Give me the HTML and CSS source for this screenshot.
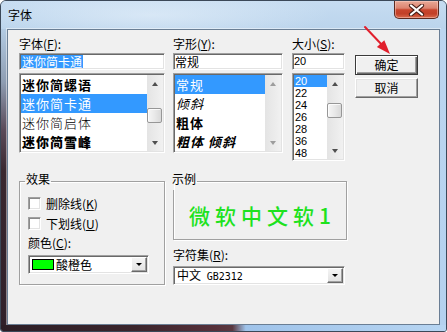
FILE: index.html
```html
<!DOCTYPE html>
<html lang="zh-CN">
<head>
<meta charset="utf-8">
<title>字体</title>
<link rel="stylesheet" href="styles.css">
</head>
<body>
<div class="window">
  <div class="titlebar">
    <span class="title">字体</span>
    <div class="close">
      <svg width="17" height="12" viewBox="0 0 17 12">
        <path d="M3 1.5 L14 10.5 M14 1.5 L3 10.5" stroke="#4a2018" stroke-width="4.2" stroke-linecap="round"/>
        <path d="M3 1.5 L14 10.5 M14 1.5 L3 10.5" stroke="#ffffff" stroke-width="2.2" stroke-linecap="round"/>
      </svg>
    </div>
  </div>
  <div class="middle">
    <div class="edge-left"></div>
    <div class="client">
      <div class="top-row">
        <div class="col col-font">
          <div class="label">字体(<u>F</u>):</div>
          <div class="edit sunken"><span class="sel-text">迷你简卡通</span></div>
          <div class="listbox sunken list-font">
            <div class="items">
              <div class="item f-bold">迷你简螺语</div>
              <div class="item selected">迷你简卡通</div>
              <div class="item f-thin">迷你简启体</div>
              <div class="item f-heavy">迷你简雪峰</div>
            </div>
            <div class="vscroll">
              <div class="sb-btn"><span class="tri-up"></span></div>
              <div class="sb-track track-font"><div class="thumb"></div></div>
              <div class="sb-btn"><span class="tri-down"></span></div>
            </div>
          </div>
        </div>
        <div class="col col-style">
          <div class="label">字形(<u>Y</u>):</div>
          <div class="edit sunken"><span class="edit-text">常规</span></div>
          <div class="listbox sunken list-style">
            <div class="items">
              <div class="item selected">常规</div>
              <div class="item s-italic">倾斜</div>
              <div class="item s-bold">粗体</div>
              <div class="item s-bold s-italic">粗体 倾斜</div>
            </div>
            <div class="vscroll disabled">
              <div class="sb-btn"><span class="tri-up"></span></div>
              <div class="sb-track"></div>
              <div class="sb-btn"><span class="tri-down"></span></div>
            </div>
          </div>
        </div>
        <div class="col col-size">
          <div class="label">大小(<u>S</u>):</div>
          <div class="edit sunken"><span class="edit-text num">20</span></div>
          <div class="listbox sunken list-size">
            <div class="items">
              <div class="item small selected">20</div>
              <div class="item small">22</div>
              <div class="item small">24</div>
              <div class="item small">26</div>
              <div class="item small">28</div>
              <div class="item small">36</div>
              <div class="item small">48</div>
            </div>
            <div class="vscroll">
              <div class="sb-btn"><span class="tri-up"></span></div>
              <div class="sb-track track-size"><div class="thumb"></div></div>
              <div class="sb-btn"><span class="tri-down"></span></div>
            </div>
          </div>
        </div>
        <div class="buttons">
          <div class="btn default">确定</div>
          <div class="btn">取消</div>
        </div>
      </div>
      <div class="bottom-row">
        <fieldset class="group effects">
          <legend>效果</legend>
          <div class="check"><span class="box"></span><span class="check-text">删除线(<u>K</u>)</span></div>
          <div class="check"><span class="box"></span><span class="check-text">下划线(<u>U</u>)</span></div>
          <div class="label color-label">颜色(<u>C</u>):</div>
          <div class="combo sunken color-combo">
            <span class="swatch"></span>
            <span class="combo-text">酸橙色</span>
            <span class="drop"><span class="tri-down black"></span></span>
          </div>
        </fieldset>
        <div class="right-col">
          <fieldset class="group sample">
            <legend>示例</legend>
            <div class="sample-text">微软中文软1</div>
          </fieldset>
          <div class="label charset-label">字符集(<u>R</u>):</div>
          <div class="combo sunken charset-combo">
            <span class="combo-text">中文 <span class="mono">GB2312</span></span>
            <span class="drop"><span class="tri-down black"></span></span>
          </div>
        </div>
      </div>
    </div>
    <div class="edge-right"></div>
  </div>
  <div class="edge-bottom"></div>
  <svg class="arrow" width="40" height="40" viewBox="0 0 40 40">
    <path d="M5 5 L23 24" stroke="#e11f2c" stroke-width="2" stroke-linecap="round"/>
    <path d="M30 32 L16.9 25 L24.3 18.2 Z" fill="#e11f2c"/>
  </svg>
</div>
</body>
</html>
```
FILE: styles.css
```css
* { box-sizing: border-box; }
html, body { margin: 0; padding: 0; }
body {
  width: 447px;
  height: 332px;
  overflow: hidden;
  background: #ffffff;
  font-family: "Noto Sans CJK SC", "Noto Sans", sans-serif;
  font-size: 12px;
  color: #000;
}
u { text-decoration: underline; text-underline-offset: 1px; }

.window {
  position: relative;
  width: 447px;
  height: 332px;
  border: 1px solid #3b4858;
  border-radius: 6px 6px 3px 3px;
  display: flex;
  flex-direction: column;
  overflow: hidden;
  background: #b8d3ef;
}

/* ---------- title bar ---------- */
.titlebar {
  height: 28px;
  flex: none;
  display: flex;
  justify-content: space-between;
  align-items: flex-start;
  padding-left: 7px;
  background:
    radial-gradient(ellipse 180px 26px at 150px 14px, rgba(235,244,252,0.55), rgba(235,244,252,0) 100%),
    linear-gradient(to bottom, #c6dcf1 0%, #bbd4ec 100%);
}
.title {
  margin-top: 6px;
  line-height: 15px;
  font-size: 12px;
  color: #000;
}
.close {
  width: 45px;
  height: 18px;
  margin-right: 7px;
  border: 1px solid #5c2a20;
  border-top: none;
  border-radius: 0 0 5px 5px;
  background: linear-gradient(to bottom, #e9a997 0%, #dc8470 42%, #c8452d 52%, #c24028 75%, #d96a4c 100%);
  box-shadow: inset 0 0 0 1px rgba(255, 220, 210, 0.45);
  display: flex;
  align-items: center;
  justify-content: center;
}
.close svg { display: block; }

/* ---------- frame ---------- */
.middle {
  height: 296px;
  flex: none;
  display: flex;
}
.edge-left {
  width: 6px;
  flex: none;
  background: linear-gradient(to bottom, #b3cbe3 0%, #8e9db2 18%, #5b4b5a 34%, #3a2830 48%, #30202a 100%);
}
.edge-right {
  flex: 1;
  background: linear-gradient(to bottom, #bcd6f0, #b4d1ef);
}
.edge-bottom {
  flex: 1;
  background: linear-gradient(to right, #2c1e26 0%, #3b252c 30%, #56303a 48%, #5a3840 52%, #9fc3ea 55%, #b7d5f2 100%);
}
.client {
  width: 433px;
  flex: none;
  border: 1px solid #6a7e94;
  box-shadow: 0 0 0 1px rgba(255, 255, 255, 0.45);
  background: #f0f0f0;
  padding: 6px 0 0 11px;
}

/* ---------- common controls ---------- */
.label {
  line-height: 15px;
  height: 15px;
  white-space: nowrap;
}
.sunken {
  border: 1px solid;
  border-color: #a0a0a0 #ffffff #ffffff #a0a0a0;
  padding: 1px;
  box-shadow: inset 1px 1px #696969, inset -1px -1px #e3e3e3;
  background: #ffffff;
}
.edit {
  height: 17px;
  margin-top: 2px;
  display: flex;
  align-items: center;
  overflow: hidden;
}
.edit-text {
  line-height: 13px;
  height: 13px;
}
.num {
  font-family: "Liberation Sans", Arial, sans-serif;
  font-size: 11px;
}
.sel-text {
  display: inline-block;
  line-height: 13px;
  height: 13px;
  background: #3399ff;
  color: #fff;
  font-size: 12px;
  padding: 0 1px;
}

.top-row {
  display: flex;
  align-items: flex-start;
}
.col-font { width: 146px; }
.col-style { width: 110px; margin-left: 8px; }
.col-size { width: 53px; margin-left: 9px; }

.listbox {
  margin-top: 3px;
  display: flex;
  overflow: hidden;
}
.list-font { height: 80px; }
.list-style { height: 80px; }
.list-size { height: 88px; }
.items {
  flex: 1;
  min-width: 0;
  overflow: hidden;
}
.item {
  height: 19px;
  line-height: 19px;
  font-size: 13px;
  letter-spacing: 1px;
  padding-left: 1px;
  white-space: nowrap;
}
.item.small {
  height: 12px;
  line-height: 12px;
  font-family: "Liberation Sans", Arial, sans-serif;
  font-size: 11px;
  letter-spacing: 0;
}
.item.selected { background: #3399ff; color: #fff; }
.f-bold { font-weight: 700; }
.f-thin { font-weight: 300; }
.f-heavy { font-weight: 900; }
.s-italic { font-style: italic; }
.s-bold { font-weight: 700; }

/* scrollbar */
.vscroll {
  width: 16px;
  flex: none;
  display: flex;
  flex-direction: column;
  background: linear-gradient(to right, #e4e4e4, #f1f1f1);
}
.sb-btn {
  height: 17px;
  flex: none;
  display: flex;
  align-items: center;
  justify-content: center;
}
.sb-track {
  flex: 1;
  display: flex;
  flex-direction: column;
}
.track-font { padding-top: 16px; }
.track-size { padding-top: 11px; }
.thumb {
  width: 15px;
  height: 15px;
  border: 1px solid #979797;
  border-radius: 2px;
  background: linear-gradient(to right, #f6f6f6 0%, #e9e9e9 50%, #d9d9d9 100%);
  box-shadow: inset 1px 1px rgba(255,255,255,0.8);
}
.tri-up, .tri-down {
  width: 0;
  height: 0;
  border-left: 3.5px solid transparent;
  border-right: 3.5px solid transparent;
}
.tri-up { border-bottom: 4px solid #4f4f4f; }
.tri-down { border-top: 4px solid #4f4f4f; }
.disabled .tri-up { border-bottom-color: #9d9d9d; }
.disabled .tri-down { border-top-color: #9d9d9d; }
.tri-down.black {
  border-left-width: 3px;
  border-right-width: 3px;
  border-top: 3px solid #000;
}

/* buttons */
.buttons {
  width: 63px;
  margin-left: 10px;
  margin-top: 19px;
  display: flex;
  flex-direction: column;
  gap: 3px;
}
.btn {
  height: 20px;
  line-height: 18px;
  text-align: center;
  background: #f0f0f0;
  border: 1px solid;
  border-color: #ffffff #696969 #696969 #ffffff;
  box-shadow: inset -1px -1px #a0a0a0, inset 1px 1px #e3e3e3;
  font-size: 12px;
}
.btn.default {
  border-color: #3a3a3a;
  box-shadow: inset 1px 1px #ffffff, inset -1px -1px #696969, inset -2px -2px #a0a0a0;
}

/* ---------- bottom area ---------- */
.bottom-row {
  display: flex;
  align-items: flex-start;
  margin-top: 11px;
}
.group {
  margin: 0;
  border: 1px solid #a0a0a0;
  box-shadow: inset 1px 1px #ffffff, 1px 1px #ffffff;
  min-width: 0;
}
.group legend {
  line-height: 14px;
  padding: 0 1px 4px;
  margin-left: -3px;
  font-size: 12px;
}
.effects {
  width: 146px;
  padding: 3px 8px 10px;
}
.check {
  height: 20px;
  display: flex;
  align-items: center;
  gap: 5px;
}
.check-text { line-height: 15px; }
.box {
  width: 13px;
  height: 13px;
  flex: none;
  background: #fff;
  border: 1px solid;
  border-color: #a0a0a0 #ffffff #ffffff #a0a0a0;
  box-shadow: inset 1px 1px #8a8a8a, inset -1px -1px #e3e3e3;
}
.color-label { margin-top: 2px; }

.combo {
  height: 19px;
  display: flex;
  align-items: center;
}
.color-combo {
  width: 121px;
  margin-top: 5px;
}
.swatch {
  width: 22px;
  height: 11px;
  margin-left: 2px;
  flex: none;
  background: #00ff00;
  border: 1px solid #000;
}
.combo-text {
  flex: 1;
  line-height: 15px;
  padding-left: 2px;
  white-space: nowrap;
}
.mono {
  font-family: "DejaVu Sans Mono", "Liberation Mono", monospace;
  font-size: 10px;
  margin-left: 3px;
}
.drop {
  width: 16px;
  height: 15px;
  flex: none;
  display: flex;
  align-items: center;
  justify-content: center;
  border: 1px solid;
  border-color: #ffffff #696969 #696969 #ffffff;
  box-shadow: inset -1px -1px #a0a0a0;
  background: linear-gradient(to bottom, #f4f4f4, #e2e2e2);
}

.right-col {
  width: 174px;
  margin-left: 8px;
}
.sample {
  width: 174px;
  height: 68px;
  padding: 0;
  display: flex;
  align-items: center;
  justify-content: center;
}
.sample-text {
  width: 100%;
  text-align: center;
  font-size: 21px;
  line-height: 26px;
  letter-spacing: 5px;
  padding-left: 5px;
  font-weight: 500;
  color: #1ee21e;
  white-space: nowrap;
}
.charset-label { margin-top: 7px; }
.charset-combo {
  width: 172px;
  margin-top: 4px;
}

/* annotation overlay */
.arrow {
  position: absolute;
  left: 359px;
  top: 21px;
  pointer-events: none;
}
```
